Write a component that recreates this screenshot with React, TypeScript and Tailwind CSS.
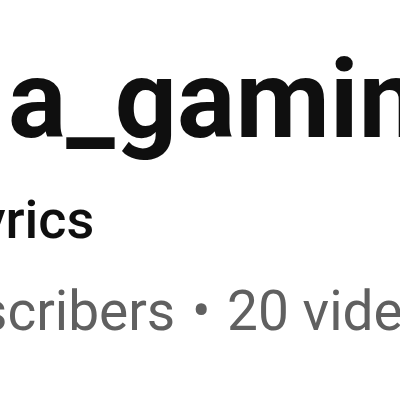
export default function App() {
  return (
    <div className="w-[400px] h-[400px] overflow-hidden bg-white" style={{ fontFamily: "Roboto, sans-serif" }}>
      <div className="flex flex-col pt-[46px]">
        <div className="whitespace-nowrap text-[109px] leading-none font-bold text-[#0f0f0f] ml-[8px]">a_gaming</div>
        <div className="whitespace-nowrap text-[54px] leading-none font-medium text-[#0f0f0f] mt-[38px] -ml-[21px]">yrics</div>
        <div className="whitespace-nowrap text-[55px] leading-none font-normal text-[#606060] mt-[37px] -ml-[21px]">
          scribers<span className="mx-[3px]"> • </span>20 videos
        </div>
      </div>
    </div>
  );
}
